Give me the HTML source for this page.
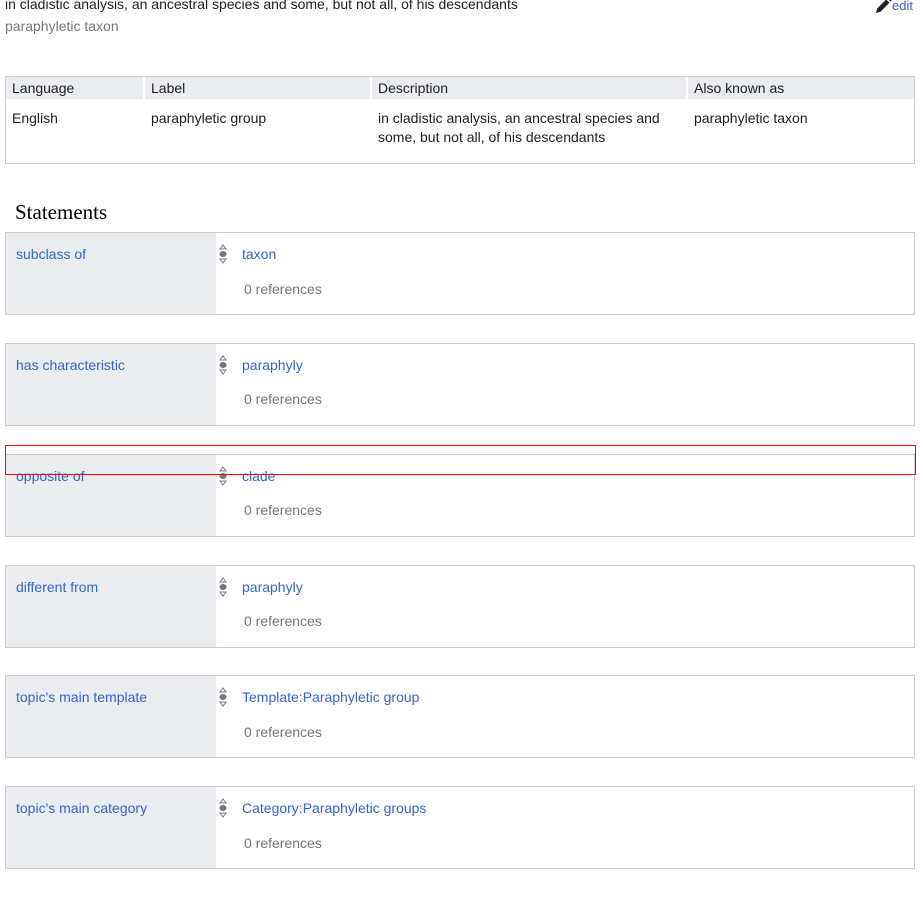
<!DOCTYPE html>
<html><head><meta charset="utf-8"><style>
*{margin:0;padding:0;box-sizing:border-box}
body{width:920px;height:920px;background:#fff;font-family:"Liberation Sans",Arial,sans-serif;font-size:14px;color:#202122;position:relative;overflow:hidden}
.a{position:absolute;white-space:nowrap}
.link{color:#3366cc}
.grey{color:#72777d}
table{position:absolute;left:5px;top:76px;width:910px;height:88px;border:1px solid #c8ccd1;border-collapse:separate;border-spacing:0}
th{background:#eaecf0;font-weight:normal;text-align:left;height:22px;padding:0 6px 1px;vertical-align:middle;border-right:2px solid #fff}
th:last-child{border-right:none}
td{vertical-align:top;padding:10px 6px 0;line-height:19px}
.st{position:absolute;left:5px;width:910px;height:83px;border:1px solid #c8ccd1}
.st .l{position:absolute;left:0;top:0;width:210px;height:81px;background:#eaecf0}
.st .p{position:absolute;left:10px;top:13px}
.st .v{position:absolute;left:236px;top:13px}
.st .r{position:absolute;left:238px;top:48px;color:#72777d}
.st svg{position:absolute;left:211px;top:10px}
</style></head><body>
<div class="a" style="left:5px;top:-4px">in cladistic analysis, an ancestral species and some, but not all, of his descendants</div>
<div class="a grey" style="left:5px;top:18px">paraphyletic taxon</div>
<div class="a" style="left:874px;top:-4px"><svg width="18" height="18" viewBox="0 0 18 18" style="vertical-align:-4px"><path d="M2 17l1.2-4.5 9-9 3.3 3.3-9 9z M13.2 2.5l1.3-1.3 3.3 3.3-1.3 1.3z" fill="#202122"/></svg><span class="link" style="font-size:13px">edit</span></div>
<table>
<tr><th style="width:139px">Language</th><th style="width:227px">Label</th><th style="width:316px">Description</th><th>Also known as</th></tr>
<tr><td>English</td><td>paraphyletic group</td><td>in cladistic analysis, an ancestral species and some, but not all, of his descendants</td><td>paraphyletic taxon</td></tr>
</table>
<div class="a" style="left:15px;top:200px;font-family:'Liberation Serif',serif;font-size:21px;color:#000">Statements</div>

<div class="st" style="top:232px"><div class="l"></div><div class="p link">subclass of</div><svg width="12" height="22" viewBox="0 0 12 22"><path d="M3 6l3-4 3 4z" fill="none" stroke="#72777d"/><ellipse cx="6" cy="11" rx="3.5" ry="3" fill="#72777d"/><path d="M3 16l3 4 3-4z" fill="none" stroke="#72777d"/></svg><div class="v link">taxon</div><div class="r">0 references</div></div>
<div class="st" style="top:343px"><div class="l"></div><div class="p link">has characteristic</div><svg width="12" height="22" viewBox="0 0 12 22"><path d="M3 6l3-4 3 4z" fill="none" stroke="#72777d"/><ellipse cx="6" cy="11" rx="3.5" ry="3" fill="#72777d"/><path d="M3 16l3 4 3-4z" fill="none" stroke="#72777d"/></svg><div class="v link">paraphyly</div><div class="r" style="top:47px">0 references</div></div>
<div class="st" style="top:454px"><div class="l"></div><div class="p link">opposite of</div><svg width="12" height="22" viewBox="0 0 12 22"><path d="M3 6l3-4 3 4z" fill="none" stroke="#72777d"/><ellipse cx="6" cy="11" rx="3.5" ry="3" fill="#72777d"/><path d="M3 16l3 4 3-4z" fill="none" stroke="#72777d"/></svg><div class="v link">clade</div><div class="r" style="top:47px">0 references</div></div>
<div class="st" style="top:565px"><div class="l"></div><div class="p link">different from</div><svg width="12" height="22" viewBox="0 0 12 22"><path d="M3 6l3-4 3 4z" fill="none" stroke="#72777d"/><ellipse cx="6" cy="11" rx="3.5" ry="3" fill="#72777d"/><path d="M3 16l3 4 3-4z" fill="none" stroke="#72777d"/></svg><div class="v link">paraphyly</div><div class="r" style="top:47px">0 references</div></div>
<div class="st" style="top:675px"><div class="l"></div><div class="p link">topic's main template</div><svg width="12" height="22" viewBox="0 0 12 22"><path d="M3 6l3-4 3 4z" fill="none" stroke="#72777d"/><ellipse cx="6" cy="11" rx="3.5" ry="3" fill="#72777d"/><path d="M3 16l3 4 3-4z" fill="none" stroke="#72777d"/></svg><div class="v link">Template:Paraphyletic group</div><div class="r">0 references</div></div>
<div class="st" style="top:786px"><div class="l"></div><div class="p link">topic's main category</div><svg width="12" height="22" viewBox="0 0 12 22"><path d="M3 6l3-4 3 4z" fill="none" stroke="#72777d"/><ellipse cx="6" cy="11" rx="3.5" ry="3" fill="#72777d"/><path d="M3 16l3 4 3-4z" fill="none" stroke="#72777d"/></svg><div class="v link">Category:Paraphyletic groups</div><div class="r">0 references</div></div>

<div style="position:absolute;left:5px;top:445px;width:911px;height:30px;border:1px solid #f00"></div>
</body></html>
